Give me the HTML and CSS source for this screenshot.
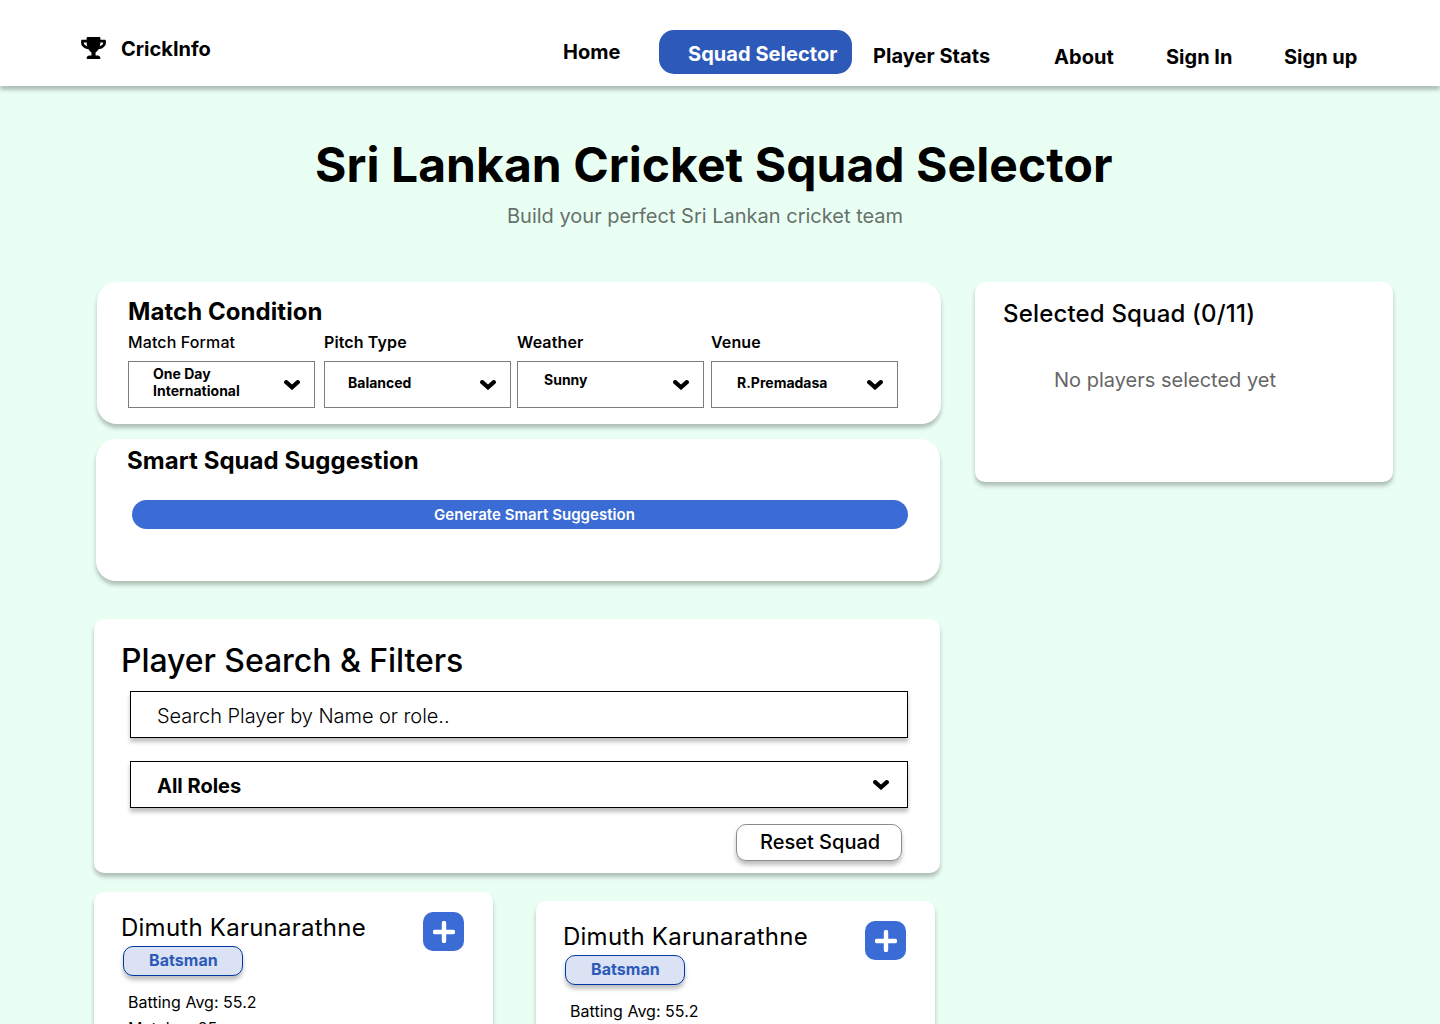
FILE: index.html
```html
<!DOCTYPE html>
<html lang="en">
<head>
<meta charset="utf-8">
<title>CrickInfo - Squad Selector</title>
<link rel="stylesheet" href="styles.css">
</head>
<body>
<svg class="defs" width="0" height="0" aria-hidden="true">
  <symbol id="chevron" viewBox="0 0 16 10"><path d="M2.2 2.200 8 7.300l5.800-5.100" fill="none" stroke="currentColor" stroke-width="4.200" stroke-linecap="round"/></symbol>
  <symbol id="plus" viewBox="0 0 22 22"><path d="M11 2v18M2 11h18" fill="none" stroke="currentColor" stroke-width="4.400" stroke-linecap="round"/></symbol>
</svg>
<header class="topbar">
  <a class="brand">
    <svg class="trophy" viewBox="0 0 576 512"><path d="M552 64H448V24c0-13.300-10.700-24-24-24H152c-13.300 0-24 10.700-24 24v40H24C10.700 64 0 74.700 0 88v56c0 35.700 22.500 72.400 61.900 100.700 31.500 22.700 69.800 37.100 110 41.700C203.300 338.500 240 360 240 360v72h-48c-35.300 0-64 20.700-64 56v12c0 6.600 5.400 12 12 12h296c6.600 0 12-5.400 12-12v-12c0-35.300-28.700-56-64-56h-48v-72s36.700-21.500 68.100-73.600c40.300-4.600 78.600-19 110-41.700 39.300-28.300 61.900-65 61.900-100.700V88c0-13.300-10.700-24-24-24zM99.300 192.800C74.900 175.200 64 155.600 64 144v-16h64.200c1 32.600 5.800 61.200 12.800 86.200-15.100-5.200-29.200-12.400-41.700-21.400zM512 144c0 16.100-17.700 36.100-35.300 48.800-12.500 9-26.700 16.200-41.800 21.400 7-25 11.800-53.600 12.800-86.200H512v16z"/></svg>
    <span>CrickInfo</span>
  </a>
  <nav class="nav">
    <a class="home">Home</a>
    <a class="active">Squad Selector</a>
    <a class="stats-link">Player Stats</a>
    <a class="about">About</a>
    <a class="signin">Sign In</a>
    <a class="signup">Sign up</a>
  </nav>
</header>
<section class="hero">
  <h1>Sri Lankan Cricket Squad Selector</h1>
  <p>Build your perfect Sri Lankan cricket team</p>
</section>
<main class="layout">
  <div class="main-column">
    <section class="card match">
      <h2>Match Condition</h2>
      <div class="conditions">
        <div class="field format"><label>Match Format</label><div class="select"><span>One Day International</span><svg class="chevron"><use href="#chevron"/></svg></div></div>
        <div class="field pitch"><label>Pitch Type</label><div class="select"><span>Balanced</span><svg class="chevron"><use href="#chevron"/></svg></div></div>
        <div class="field weather"><label>Weather</label><div class="select"><span>Sunny</span><svg class="chevron"><use href="#chevron"/></svg></div></div>
        <div class="field venue"><label>Venue</label><div class="select"><span>R.Premadasa</span><svg class="chevron"><use href="#chevron"/></svg></div></div>
      </div>
    </section>
    <section class="card smart">
      <h2>Smart Squad Suggestion</h2>
      <div class="generate">Generate Smart Suggestion</div>
    </section>
    <section class="card search">
      <h2>Player Search &amp; Filters</h2>
      <div class="box query">Search Player by Name or role..</div>
      <div class="box roles"><span>All Roles</span><svg class="chevron"><use href="#chevron"/></svg></div>
      <div class="reset">Reset Squad</div>
    </section>
    <div class="players">
      <article class="card player">
        <div class="info">
          <h3>Dimuth Karunarathne</h3>
          <div class="badge">Batsman</div>
          <p>Batting Avg: 55.2</p>
          <p>Matches:25</p>
        </div>
        <div class="add"><svg><use href="#plus"/></svg></div>
      </article>
      <article class="card player lower">
        <div class="info">
          <h3>Dimuth Karunarathne</h3>
          <div class="badge">Batsman</div>
          <p>Batting Avg: 55.2</p>
        </div>
        <div class="add"><svg><use href="#plus"/></svg></div>
      </article>
    </div>
  </div>
  <aside class="card squad">
    <h2>Selected Squad (0/11)</h2>
    <p>No players selected yet</p>
  </aside>
</main>
</body>
</html>
```
FILE: styles.css
```css
* { box-sizing: border-box; }
body {
  margin: 0;
  width: 1440px;
  height: 1024px;
  overflow: hidden;
  background: #eafff4;
  color: #000;
  font-family: Inter, sans-serif;
}
h1, h2, h3, p { margin: 0; }
svg { display: block; flex: none; }
.defs { position: absolute; }

.topbar {
  display: flex;
  height: 86px;
  padding-left: 81px;
  background: #fff;
  box-shadow: 0 4px 4px rgba(0, 0, 0, .25);
  font-size: 20px;
  line-height: 24px;
  font-weight: 700;
}
.brand { display: flex; width: 482px; padding-top: 37px; }
.trophy { width: 25px; height: 22px; margin-right: 15px; }
.nav { display: flex; align-items: flex-start; white-space: nowrap; letter-spacing: .05px; }
.home { width: 96px; padding-top: 40px; }
.active {
  width: 193px;
  height: 44px;
  margin-top: 30px;
  padding: 12px 0 0 29px;
  border-radius: 15px;
  background: #2d5ab9;
  color: #fff;
}
.stats-link { width: 202px; padding: 44px 0 0 21px; }
.about { width: 112px; padding-top: 45px; }
.signin { width: 118px; padding-top: 45px; letter-spacing: 0; }
.signup { padding-top: 45px; letter-spacing: 0; }

.hero { height: 196px; padding-top: 50px; }
.hero h1 { padding-left: 315px; font-size: 48px; line-height: 58px; font-weight: 700; letter-spacing: .06px; }
.hero p { margin-top: 10px; padding-left: 507px; color: #66716b; font-size: 20px; line-height: 24px; font-weight: 400; }

.layout { display: flex; align-items: flex-start; padding-left: 94px; }
.main-column { width: 847px; margin-right: 34px; flex: none; }
.card { background: #fff; border-radius: 10px; box-shadow: 0 4px 4px rgba(0, 0, 0, .25); }
.chevron { width: 16px; height: 10px; }

.match { width: 844px; height: 142px; margin-left: 3px; padding: 15px 0 0 31px; border-radius: 20px; }
.match h2, .smart h2 { font-size: 24px; line-height: 29px; font-weight: 700; letter-spacing: .06px; }
.conditions { display: flex; margin-top: 7px; }
.field { width: 187px; }
.field label { display: block; height: 28px; font-size: 16px; line-height: 19px; font-weight: 600; letter-spacing: .12px; }
.format label { font-weight: 500; }
.pitch { margin-left: 9px; }
.weather { margin-left: 6px; }
.venue { margin-left: 7px; }
.select {
  display: flex;
  justify-content: space-between;
  height: 47px;
  padding: 12px 14px 0 24px;
  border: 1px solid #7d7d7d;
  font-size: 14px;
  line-height: 17px;
  font-weight: 700;
}
.select .chevron { margin-top: 6px; }
.format .select { padding-top: 3px; }
.format .select span { width: 100px; }
.format .chevron { margin-top: 15px; }
.pitch .select { padding-left: 23px; }
.weather .select { padding: 9px 14px 0 26px; }
.weather .chevron { margin-top: 9px; }
.venue .select { padding-left: 25px; }

.smart { width: 844px; height: 142px; margin: 15px 0 0 2px; padding: 7px 0 0 31px; border-radius: 20px; }
.generate {
  width: 776px;
  height: 29px;
  margin: 25px 0 0 5px;
  padding-left: 302px;
  border-radius: 15px;
  background: #3b6cd5;
  color: #fff;
  font-size: 15px;
  line-height: 29px;
  font-weight: 600;
  letter-spacing: .04px;
}

.search { width: 846px; height: 254px; margin-top: 38px; padding: 22px 0 0 27px; }
.search h2 { font-size: 32px; line-height: 39px; font-weight: 500; letter-spacing: -.06px; }
.box {
  width: 778px;
  height: 47px;
  margin: 11px 0 0 9px;
  padding: 12px 18px 0 26px;
  border: 1px solid #000;
  box-shadow: 0 4px 4px rgba(0, 0, 0, .25);
  font-size: 20px;
  line-height: 24px;
}
.query { font-weight: 300; letter-spacing: -.05px; }
.roles { display: flex; justify-content: space-between; margin-top: 23px; font-weight: 700; }
.roles .chevron { margin-top: 6px; }
.reset {
  width: 166px;
  height: 37px;
  margin: 16px 0 0 615px;
  padding: 5px 0 0 23px;
  border: 1px solid #8c8c8c;
  border-radius: 10px;
  box-shadow: 0 4px 4px rgba(0, 0, 0, .25);
  font-size: 20px;
  line-height: 24px;
  font-weight: 500;
}

.players { display: flex; gap: 43px; height: 132px; margin-top: 19px; overflow: hidden; padding: 0 10px; margin-left: -10px; margin-right: -10px; }
.player { display: flex; justify-content: space-between; flex: none; width: 399px; height: 200px; padding: 20px 29px 0 27px; }
.lower { margin-top: 9px; }
.info h3 { margin-top: 1px; font-size: 24px; line-height: 29px; font-weight: 400; letter-spacing: .24px; }
.badge {
  width: 120px;
  height: 30px;
  margin: 4px 0 17px 2px;
  padding: 4px 0 0 25px;
  border: 1px solid #0038a8;
  border-radius: 10px;
  background: #dae2f3;
  box-shadow: 0 4px 4px rgba(0, 0, 0, .25);
  color: #2d5ab9;
  font-size: 16px;
  line-height: 19px;
  font-weight: 700;
  letter-spacing: .04px;
}
.info p { margin: 0 0 7px 7px; font-size: 16px; line-height: 19px; font-weight: 400; letter-spacing: .03px; }
.add { width: 41px; height: 39px; padding: 9px 0 0 10px; border-radius: 10px; background: #3b6cd5; color: #fff; }
.add svg { width: 22px; height: 22px; }

.squad { width: 418px; height: 200px; padding: 17px 0 0 28px; }
.squad h2 { font-size: 24px; line-height: 29px; font-weight: 500; letter-spacing: .17px; }
.squad p { margin: 40px 0 0 51px; color: #666; font-size: 20px; line-height: 24px; font-weight: 400; }
```
